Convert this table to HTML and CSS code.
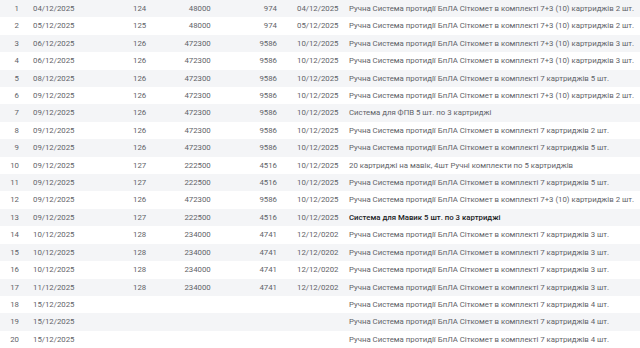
FILE: index.html
```html
<!DOCTYPE html>
<html lang="uk">
<head>
<meta charset="utf-8">
<title>Замовлення</title>
<link rel="stylesheet" href="styles.css">
</head>
<body>
<table class="sheet">
  <colgroup>
    <col class="w-num"><col class="w-date"><col class="w-a"><col class="w-b"><col class="w-c"><col class="w-d"><col class="w-desc">
  </colgroup>
  <tbody>
    <tr><td class="num">1</td><td class="date">04/12/2025</td><td class="r ca">124</td><td class="r cb">48000</td><td class="r cc">974</td><td class="date2">04/12/2025</td><td class="desc">Ручна Система протидії БпЛА Сіткомет в комплекті 7+3 (10) картриджів 2 шт.</td></tr>
    <tr><td class="num">2</td><td class="date">05/12/2025</td><td class="r ca">125</td><td class="r cb">48000</td><td class="r cc">974</td><td class="date2">05/12/2025</td><td class="desc">Ручна Система протидії БпЛА Сіткомет в комплекті 7+3 (10) картриджів 2 шт.</td></tr>
    <tr><td class="num">3</td><td class="date">06/12/2025</td><td class="r ca">126</td><td class="r cb">472300</td><td class="r cc">9586</td><td class="date2">10/12/2025</td><td class="desc">Ручна Система протидії БпЛА Сіткомет в комплекті 7+3 (10) картриджів 3 шт.</td></tr>
    <tr><td class="num">4</td><td class="date">06/12/2025</td><td class="r ca">126</td><td class="r cb">472300</td><td class="r cc">9586</td><td class="date2">10/12/2025</td><td class="desc">Ручна Система протидії БпЛА Сіткомет в комплекті 7+3 (10) картриджів 3 шт.</td></tr>
    <tr><td class="num">5</td><td class="date">08/12/2025</td><td class="r ca">126</td><td class="r cb">472300</td><td class="r cc">9586</td><td class="date2">10/12/2025</td><td class="desc">Ручна Система протидії БпЛА Сіткомет в комплекті 7 картриджів 5 шт.</td></tr>
    <tr><td class="num">6</td><td class="date">09/12/2025</td><td class="r ca">126</td><td class="r cb">472300</td><td class="r cc">9586</td><td class="date2">10/12/2025</td><td class="desc">Ручна Система протидії БпЛА Сіткомет в комплекті 7+3 (10) картриджів 2 шт.</td></tr>
    <tr><td class="num">7</td><td class="date">09/12/2025</td><td class="r ca">126</td><td class="r cb">472300</td><td class="r cc">9586</td><td class="date2">10/12/2025</td><td class="desc">Система для ФПВ 5 шт. по 3 картриджі</td></tr>
    <tr><td class="num">8</td><td class="date">09/12/2025</td><td class="r ca">126</td><td class="r cb">472300</td><td class="r cc">9586</td><td class="date2">10/12/2025</td><td class="desc">Ручна Система протидії БпЛА Сіткомет в комплекті 7 картриджів 2 шт.</td></tr>
    <tr><td class="num">9</td><td class="date">09/12/2025</td><td class="r ca">126</td><td class="r cb">472300</td><td class="r cc">9586</td><td class="date2">10/12/2025</td><td class="desc">Ручна Система протидії БпЛА Сіткомет в комплекті 7 картриджів 5 шт.</td></tr>
    <tr><td class="num">10</td><td class="date">09/12/2025</td><td class="r ca">127</td><td class="r cb">222500</td><td class="r cc">4516</td><td class="date2">10/12/2025</td><td class="desc">20 картриджі на мавік, 4шт Ручні комплекти по 5 картриджів</td></tr>
    <tr><td class="num">11</td><td class="date">09/12/2025</td><td class="r ca">127</td><td class="r cb">222500</td><td class="r cc">4516</td><td class="date2">10/12/2025</td><td class="desc">Ручна Система протидії БпЛА Сіткомет в комплекті 7 картриджів 5 шт.</td></tr>
    <tr><td class="num">12</td><td class="date">09/12/2025</td><td class="r ca">126</td><td class="r cb">472300</td><td class="r cc">9586</td><td class="date2">10/12/2025</td><td class="desc">Ручна Система протидії БпЛА Сіткомет в комплекті 7+3 (10) картриджів 2 шт.</td></tr>
    <tr><td class="num">13</td><td class="date">09/12/2025</td><td class="r ca">127</td><td class="r cb">222500</td><td class="r cc">4516</td><td class="date2">10/12/2025</td><td class="desc strong">Система для Мавик 5 шт. по 3 картриджі</td></tr>
    <tr><td class="num">14</td><td class="date">10/12/2025</td><td class="r ca">128</td><td class="r cb">234000</td><td class="r cc">4741</td><td class="date2">12/12/0202</td><td class="desc">Ручна Система протидії БпЛА Сіткомет в комплекті 7 картриджів 3 шт.</td></tr>
    <tr><td class="num">15</td><td class="date">10/12/2025</td><td class="r ca">128</td><td class="r cb">234000</td><td class="r cc">4741</td><td class="date2">12/12/0202</td><td class="desc">Ручна Система протидії БпЛА Сіткомет в комплекті 7 картриджів 3 шт.</td></tr>
    <tr><td class="num">16</td><td class="date">10/12/2025</td><td class="r ca">128</td><td class="r cb">234000</td><td class="r cc">4741</td><td class="date2">12/12/0202</td><td class="desc">Ручна Система протидії БпЛА Сіткомет в комплекті 7 картриджів 3 шт.</td></tr>
    <tr><td class="num">17</td><td class="date">11/12/2025</td><td class="r ca">128</td><td class="r cb">234000</td><td class="r cc">4741</td><td class="date2">12/12/0202</td><td class="desc">Ручна Система протидії БпЛА Сіткомет в комплекті 7 картриджів 3 шт.</td></tr>
    <tr><td class="num">18</td><td class="date">15/12/2025</td><td class="r ca"></td><td class="r cb"></td><td class="r cc"></td><td class="date2"></td><td class="desc">Ручна Система протидії БпЛА Сіткомет в комплекті 7 картриджів 4 шт.</td></tr>
    <tr><td class="num">19</td><td class="date">15/12/2025</td><td class="r ca"></td><td class="r cb"></td><td class="r cc"></td><td class="date2"></td><td class="desc">Ручна Система протидії БпЛА Сіткомет в комплекті 7 картриджів 4 шт.</td></tr>
    <tr><td class="num">20</td><td class="date">15/12/2025</td><td class="r ca"></td><td class="r cb"></td><td class="r cc"></td><td class="date2"></td><td class="desc">Ручна Система протидії БпЛА Сіткомет в комплекті 7 картриджів 4 шт.</td></tr>
  </tbody>
</table>
</body>
</html>
```

FILE: styles.css
```css
html, body {
  margin: 0;
  padding: 0;
  background: #ffffff;
}

body {
  font-family: Roboto, "Liberation Sans", Arial, sans-serif;
  font-size: 7.8px;
  color: #5f6368;
  overflow: hidden;
}

.sheet {
  width: 640px;
  border-collapse: collapse;
  table-layout: fixed;
}

.w-num { width: 29px; }
.w-date { width: 100px; }
.w-a { width: 21px; }
.w-b { width: 65px; }
.w-c { width: 78px; }
.w-d { width: 52px; }
.w-desc { width: 295px; }

.sheet tr {
  height: 17.4px;
}

.sheet tr:nth-child(odd) {
  background: #f4f5f7;
}

.sheet td {
  padding: 0 4px;
  height: 17.4px;
  line-height: 17.4px;
  white-space: nowrap;
  overflow: hidden;
  vertical-align: middle;
}

.sheet td.num {
  text-align: right;
  padding-right: 10px;
  padding-left: 0;
}

.sheet td.r {
  text-align: right;
}

.sheet td.ca { padding-right: 4px; }
.sheet td.cb { padding-right: 4.3px; }
.sheet td.cc { padding-right: 16px; }

.sheet td.date2 {
  padding-left: 4px;
  overflow: visible;
}

.sheet td.desc {
  padding-left: 4px;
}

.sheet td.strong {
  color: #202124;
  font-weight: 500;
}
```
